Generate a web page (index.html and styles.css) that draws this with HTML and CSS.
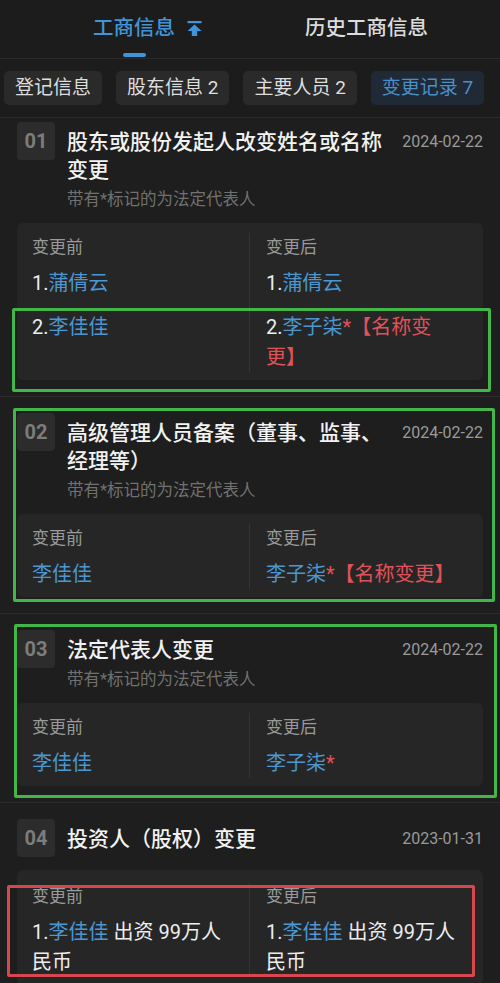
FILE: index.html
```html
<!DOCTYPE html>
<html lang="zh-CN">
<head>
<meta charset="utf-8">
<meta name="viewport" content="width=500">
<title>工商信息</title>
<link rel="stylesheet" href="styles.css">
</head>
<body>
<div class="page">
  <header class="tabs">
    <div class="tab tab-active">
      <span class="tab-label">工商信息<i class="tab-underline"></i></span>
      <svg class="pin" viewBox="0 0 15 15" width="15" height="15" aria-hidden="true">
        <rect x="0.5" y="0" width="14" height="2.2" fill="#3f95da"/>
        <path d="M7.5 3.4 L14.5 10 L10.2 10 L10.2 15 L4.8 15 L4.8 10 L0.5 10 Z" fill="#3f95da"/>
      </svg>
    </div>
    <div class="tab tab-other">历史工商信息</div>
  </header>

  <nav class="chips">
    <span class="chip">登记信息</span>
    <span class="chip">股东信息 2</span>
    <span class="chip">主要人员 2</span>
    <span class="chip chip-active">变更记录 7</span>
  </nav>

  <section class="list">
    <article class="item item-first">
      <div class="head">
        <div class="num">01</div>
        <div class="main">
          <div class="title">股东或股份发起人改变姓名或名称变更</div>
          <div class="sub">带有*标记的为法定代表人</div>
        </div>
        <div class="date">2024-02-22</div>
      </div>
      <div class="box">
        <div class="col">
          <div class="label">变更前</div>
          <div class="val">1.<span class="name">蒲倩云</span></div>
          <div class="val">2.<span class="name">李佳佳</span></div>
        </div>
        <div class="col col-right">
          <div class="label">变更后</div>
          <div class="val">1.<span class="name">蒲倩云</span></div>
          <div class="val">2.<span class="name">李子柒</span><span class="tag">*</span><span class="tag">【名称变</span><span class="tag">更】</span></div>
        </div>
      </div>
    </article>

    <article class="item">
      <div class="head">
        <div class="num">02</div>
        <div class="main">
          <div class="title">高级管理人员备案（董事、监事、经理等）</div>
          <div class="sub">带有*标记的为法定代表人</div>
        </div>
        <div class="date">2024-02-22</div>
      </div>
      <div class="box">
        <div class="col">
          <div class="label">变更前</div>
          <div class="val"><span class="name">李佳佳</span></div>
        </div>
        <div class="col col-right">
          <div class="label">变更后</div>
          <div class="val"><span class="name">李子柒</span><span class="tag">*【名称变更】</span></div>
        </div>
      </div>
    </article>

    <article class="item">
      <div class="head">
        <div class="num">03</div>
        <div class="main">
          <div class="title">法定代表人变更</div>
          <div class="sub">带有*标记的为法定代表人</div>
        </div>
        <div class="date">2024-02-22</div>
      </div>
      <div class="box">
        <div class="col">
          <div class="label">变更前</div>
          <div class="val"><span class="name">李佳佳</span></div>
        </div>
        <div class="col col-right">
          <div class="label">变更后</div>
          <div class="val"><span class="name">李子柒</span><span class="tag">*</span></div>
        </div>
      </div>
    </article>

    <article class="item item-plain">
      <div class="head">
        <div class="num">04</div>
        <div class="main">
          <div class="title">投资人（股权）变更</div>
        </div>
        <div class="date">2023-01-31</div>
      </div>
      <div class="box">
        <div class="col">
          <div class="label">变更前</div>
          <div class="val">1.<span class="name">李佳佳</span> 出资 99万人民币</div>
        </div>
        <div class="col col-right">
          <div class="label">变更后</div>
          <div class="val">1.<span class="name">李佳佳</span> 出资 99万人民币</div>
        </div>
      </div>
    </article>
  </section>

  <div class="mark mark-green mark-1"></div>
  <div class="mark mark-green mark-2"></div>
  <div class="mark mark-green mark-3"></div>
  <div class="mark mark-red mark-4"></div>
</div>
</body>
</html>
```

FILE: styles.css
```css
* { box-sizing: border-box; }

html, body {
  margin: 0;
  padding: 0;
  background: #1c1c1c;
}

body {
  font-family: Roboto, "Noto Sans CJK SC", sans-serif;
  color: #ececec;
}

.page {
  position: relative;
  width: 500px;
  overflow: hidden;
}

/* ---------- top tabs ---------- */
.tabs {
  height: 59px;
  display: flex;
  align-items: flex-start;
  padding: 14px 0 0 93px;
  border-bottom: 1px solid #2a2a2a;
  background: #1c1c1c;
}

.tab {
  font-size: 20.5px;
  line-height: 28px;
  font-weight: 500;
}

.tab-active {
  display: flex;
  align-items: flex-start;
  color: #3f95da;
}

.tab-label {
  display: flex;
  flex-direction: column;
  align-items: center;
}

.tab-underline {
  display: block;
  width: 23px;
  height: 4px;
  margin-top: 11px;
  border-radius: 2px;
  background: #3f95da;
}

.pin {
  display: block;
  margin: 7px 0 0 12px;
}

.tab-other {
  margin-left: 103px;
  color: #dcdcdc;
}

/* ---------- chips ---------- */
.chips {
  display: flex;
  gap: 14px;
  padding: 12px 4px;
  border-bottom: 1px solid #2a2a2a;
  background: #1c1c1c;
}

.chip {
  height: 34px;
  padding: 0 11px;
  border-radius: 5px;
  background: #2a2a2a;
  color: #dedede;
  font-size: 19px;
  line-height: 34px;
  white-space: nowrap;
}

.chip-active {
  background: #1f2a36;
  color: #4a8fc9;
}

/* ---------- list ---------- */
.item {
  padding: 16px 17px 16px;
  border-bottom: 1px solid #2b2b2b;
  background: #1e1e1e;
}

.item-first {
  padding-top: 4px;
}

.head {
  display: flex;
  align-items: flex-start;
}

.num {
  flex: none;
  width: 38px;
  height: 38px;
  border-radius: 4px;
  background: #2c2c2c;
  color: #7c7c7c;
  font-family: Roboto, sans-serif;
  font-weight: 700;
  font-size: 20px;
  line-height: 38px;
  text-align: center;
}

.main {
  flex: 1;
  min-width: 0;
  margin-left: 12px;
  padding-top: 6px;
}

.title {
  font-size: 21px;
  line-height: 28px;
  font-weight: 500;
  color: #f2f2f2;
}

.sub {
  margin-top: 5px;
  font-size: 16.5px;
  line-height: 22px;
  color: #717171;
}

.date {
  flex: none;
  margin-left: 12px;
  padding-top: 6px;
  font-size: 16px;
  line-height: 28px;
  color: #9a9a9a;
}

.box {
  display: flex;
  margin-top: 12px;
  padding: 10px 0 8px;
  border-radius: 6px;
  background: #262626;
}

.item-plain .box {
  margin-top: 13px;
  padding-top: 12px;
}

.col {
  flex: 1;
  min-width: 0;
  padding: 2px 16px 0 15px;
}

.col-right {
  border-left: 1px solid #343434;
  padding-left: 16px;
}

.label {
  font-size: 17px;
  line-height: 24px;
  color: #9a9a9a;
}

.val {
  margin-top: 14px;
  font-size: 20px;
  line-height: 30px;
  color: #ededed;
}

.label + .val {
  margin-top: 9px;
}

.name {
  color: #4a97d2;
}

.tag {
  color: #e0525a;
}

/* ---------- annotation overlays ---------- */
.mark {
  position: absolute;
  border: 3px solid #43b649;
  border-radius: 2px;
  pointer-events: none;
}

.mark-red {
  border-color: #d9474e;
}

.mark-1 { left: 12px; top: 308px; width: 479px; height: 84px; }
.mark-2 { left: 13px; top: 408px; width: 482px; height: 194px; }
.mark-3 { left: 14px; top: 624px; width: 483px; height: 174px; }
.mark-4 { left: 7px;  top: 885px; width: 468px; height: 92px; }
```
